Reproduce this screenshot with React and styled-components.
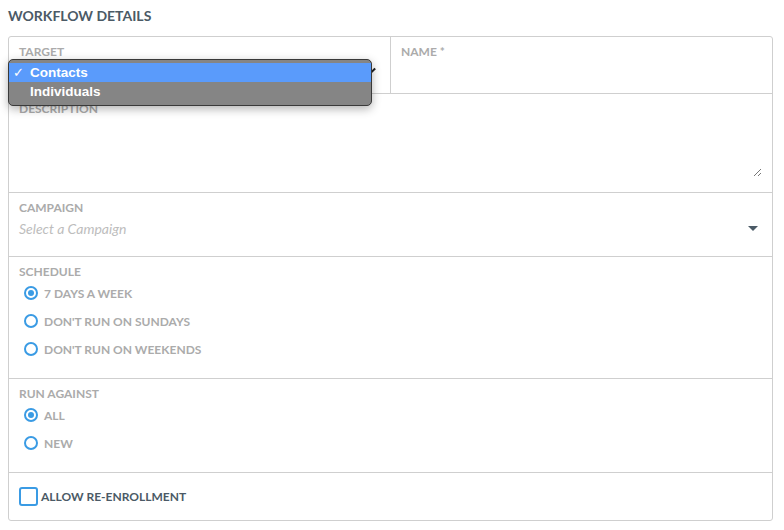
import styled, { createGlobalStyle } from 'styled-components';

const GlobalStyle = createGlobalStyle`
  html, body {
    margin: 0;
    padding: 0;
    background: #fff;
  }
  body {
    font-family: Lato, "Open Sans", sans-serif;
  }
`;

const Page = styled.div`
  padding: 8px 11px 10px 8px;
`;

const Heading = styled.h2`
  margin: 0 0 12px;
  font-size: 14px;
  line-height: 16px;
  font-weight: 700;
  color: #4b5a66;
`;

const Card = styled.div`
  border: 1px solid #cfcfcf;
  border-radius: 3px;
`;

const Row = styled.div`
  display: flex;
  border-top: ${(p) => (p.$first ? 'none' : '1px solid #cfcfcf')};
`;

const Field = styled.div`
  position: relative;
  flex: 1;
  padding: 8px 10px 15px;
  & + & {
    border-left: 1px solid #cfcfcf;
  }
`;

const Label = styled.div`
  font-size: 12px;
  line-height: 14px;
  font-weight: 700;
  color: #ababab;
  text-transform: uppercase;
`;

const Blank = styled.div`
  height: ${(p) => p.$h}px;
`;

const Caret = styled.span`
  position: absolute;
  right: 14px;
  top: 33px;
  width: 7px;
  height: 1.5px;
  background: #222;
  transform: rotate(-45deg);
`;

const TextBox = styled.div`
  position: relative;
  height: 61px;
`;

const Resize = styled.svg`
  position: absolute;
  right: 0;
  bottom: 0;
`;

const SelectRow = styled.div`
  display: flex;
  align-items: center;
  justify-content: space-between;
  height: 26px;
  padding-right: 4px;
`;

const Placeholder = styled.span`
  font-size: 14px;
  font-style: italic;
  color: #bdbdbd;
`;

const Triangle = styled.span`
  width: 0;
  height: 0;
  border-left: 5px solid transparent;
  border-right: 5px solid transparent;
  border-top: 5px solid #4b5a66;
`;

const Option = styled.label`
  display: flex;
  align-items: center;
  gap: 6px;
  height: 28px;
  padding-left: 5px;
  font-size: 12px;
  font-weight: 700;
  color: #ababab;
  text-transform: uppercase;
`;

const Radio = styled.span`
  box-sizing: border-box;
  width: 14px;
  height: 14px;
  border-radius: 50%;
  border: 2px solid #3a9be4;
  display: flex;
  align-items: center;
  justify-content: center;
  &::after {
    content: '';
    width: 6px;
    height: 6px;
    border-radius: 50%;
    background: #3a9be4;
    display: ${(p) => (p.$checked ? 'block' : 'none')};
  }
`;

const CheckRow = styled.label`
  display: flex;
  align-items: center;
  gap: 3px;
  padding: 14px 10px;
  font-size: 12px;
  font-weight: 700;
  color: #4b5a66;
  text-transform: uppercase;
`;

const Box = styled.span`
  box-sizing: border-box;
  width: 19px;
  height: 19px;
  border: 2px solid #3a9be4;
  border-radius: 3px;
`;

const Menu = styled.div`
  position: absolute;
  left: -1px;
  top: 22px;
  width: 362px;
  padding: 3px 0 4px;
  background: #858585;
  border: 1px solid #3a3a3a;
  border-radius: 5px;
  box-shadow: 0 3px 10px rgba(0, 0, 0, 0.3);
  z-index: 2;
  font-family: "Liberation Sans", Arial, sans-serif;
`;

const MenuItem = styled.div`
  display: flex;
  align-items: center;
  height: 19px;
  padding-left: 4px;
  font-size: 13.5px;
  font-weight: 700;
  color: #fff;
  background: ${(p) => (p.$active ? '#5a9bfb' : 'transparent')};
`;

const Tick = styled.span`
  width: 17px;
  font-size: 13px;
  font-weight: 400;
`;

function RadioGroup({ options, value }) {
  return options.map((opt) => (
    <Option key={opt}>
      <Radio $checked={opt === value} />
      {opt}
    </Option>
  ));
}

export default function App() {
  return (
    <>
      <GlobalStyle />
      <Page>
        <Heading>WORKFLOW DETAILS</Heading>
        <Card>
          <Row $first>
            <Field>
              <Label>Target</Label>
              <Blank $h={19} />
              <Caret />
              <Menu>
                <MenuItem $active>
                  <Tick>✓</Tick>Contacts
                </MenuItem>
                <MenuItem>
                  <Tick />Individuals
                </MenuItem>
              </Menu>
            </Field>
            <Field>
              <Label>Name *</Label>
              <Blank $h={19} />
            </Field>
          </Row>
          <Row>
            <Field>
              <Label>Description</Label>
              <TextBox>
                <Resize width="9" height="9" viewBox="0 0 9 9">
                  <path d="M1 8L8 1M5 8L8 5" stroke="#777" strokeWidth="1" />
                </Resize>
              </TextBox>
            </Field>
          </Row>
          <Row>
            <Field>
              <Label>Campaign</Label>
              <SelectRow>
                <Placeholder>Select a Campaign</Placeholder>
                <Triangle />
              </SelectRow>
            </Field>
          </Row>
          <Row>
            <Field>
              <Label>Schedule</Label>
              <RadioGroup
                options={['7 days a week', "Don't run on Sundays", "Don't run on weekends"]}
                value="7 days a week"
              />
            </Field>
          </Row>
          <Row>
            <Field>
              <Label>Run Against</Label>
              <RadioGroup options={['All', 'New']} value="All" />
            </Field>
          </Row>
          <Row>
            <CheckRow>
              <Box />
              Allow Re-Enrollment
            </CheckRow>
          </Row>
        </Card>
      </Page>
    </>
  );
}
